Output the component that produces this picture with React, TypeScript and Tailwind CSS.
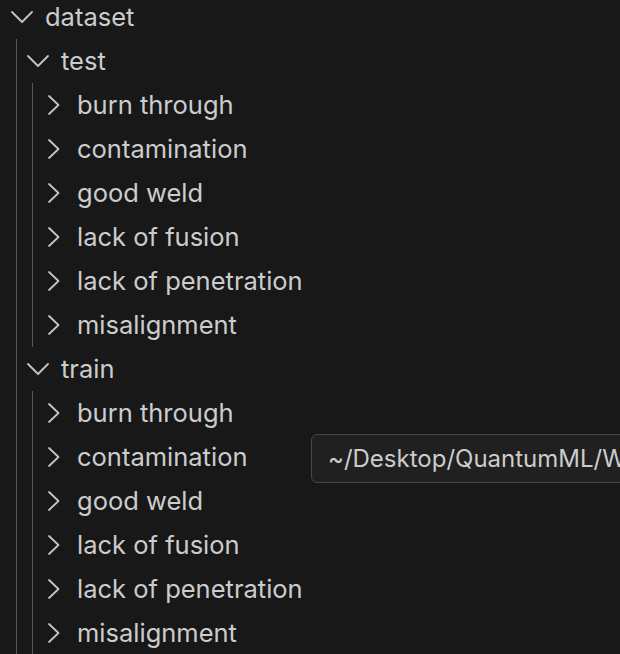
import React from "react";

const children = [
  "burn through",
  "contamination",
  "good weld",
  "lack of fusion",
  "lack of penetration",
  "misalignment",
];

function ChevronDown() {
  return (
    <svg width="32" height="32" viewBox="0 0 32 32" fill="none">
      <path d="M6 11 L16 21 L26 11" stroke="#c5c5c5" strokeWidth="1.8" strokeLinecap="round" strokeLinejoin="round" />
    </svg>
  );
}

function ChevronRight() {
  return (
    <svg width="32" height="32" viewBox="0 0 32 32" fill="none">
      <path d="M11 7 L20.5 16 L11 25" stroke="#c5c5c5" strokeWidth="1.8" strokeLinecap="round" strokeLinejoin="round" />
    </svg>
  );
}

function Row({ label, open, pl }: { label: string; open: boolean; pl: string }) {
  return (
    <div className={`flex h-[44px] items-center ${pl}`}>
      <div className="flex h-[32px] w-[32px] shrink-0 items-center justify-center">
        {open ? <ChevronDown /> : <ChevronRight />}
      </div>
      <span className="ml-[7px] whitespace-nowrap text-[25.5px] leading-none text-[#cccccc]">{label}</span>
    </div>
  );
}

function Folder({ name }: { name: string }) {
  return (
    <div>
      <Row label={name} open pl="pl-[5px]" />
      <div className="ml-[15px] border-l border-[#585858]">
        {children.map((c) => (
          <Row key={c} label={c} open={false} pl="pl-[5px]" />
        ))}
      </div>
    </div>
  );
}

export default function App() {
  return (
    <div
      className="relative h-[654px] w-[620px] overflow-hidden bg-[#181818]"
      style={{ fontFamily: "Inter, 'Noto Sans', sans-serif" }}
    >
      <div className="-mt-[5px]">
        <Row label="dataset" open pl="pl-[6px]" />
        <div className="ml-[16px] border-l border-[#585858]">
          <Folder name="test" />
          <Folder name="train" />
        </div>
      </div>
      <div className="absolute left-[311px] top-[434px] flex h-[49px] w-[340px] items-center rounded-[6px] border border-[#454545] bg-[#202020] pl-[16px]">
        <span className="whitespace-nowrap text-[24px] leading-none text-[#cccccc]">~/Desktop/QuantumML/W</span>
      </div>
    </div>
  );
}
